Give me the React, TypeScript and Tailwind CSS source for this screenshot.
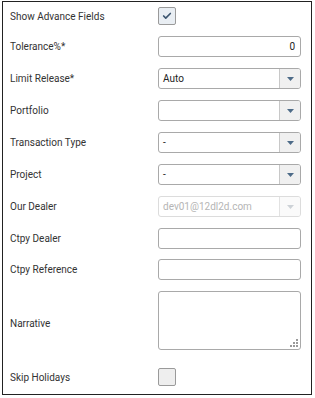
import { Check } from "lucide-react"

const labelCls = "w-[148px] shrink-0 text-[10px] text-[#333]"

function Caret({ disabled }: { disabled?: boolean }) {
  return (
    <div
      className={`w-[21px] h-full flex items-center justify-center border-l ${
        disabled ? "border-[#e2e2e2] bg-[#fafafa]" : "border-[#c8c8c8] bg-[#f0f0f0]"
      }`}
    >
      <svg width="7" height="4" viewBox="0 0 7 4">
        <path d="M0 0 H7 L3.5 4 Z" fill={disabled ? "#cdd2d7" : "#4d6b88"} />
      </svg>
    </div>
  )
}

function Select({ value, disabled }: { value?: string; disabled?: boolean }) {
  return (
    <div
      className={`w-[143px] h-[21px] flex rounded-[3px] border overflow-hidden ${
        disabled ? "border-[#dcdcdc]" : "border-[#a9a9a9]"
      }`}
    >
      <div
        className={`flex-1 px-[4px] flex items-center text-[10px] ${
          disabled ? "text-[#b5b5b5]" : "text-[#222]"
        }`}
      >
        {value}
      </div>
      <Caret disabled={disabled} />
    </div>
  )
}

function TextBox({ value, right }: { value?: string; right?: boolean }) {
  return (
    <div
      className={`w-[143px] h-[21px] rounded-[3px] border border-[#a9a9a9] px-[5px] flex items-center text-[10px] text-[#222] ${
        right ? "justify-end" : ""
      }`}
    >
      {value}
    </div>
  )
}

function CheckBox({ checked }: { checked?: boolean }) {
  return (
    <div
      className={`w-[18px] h-[18px] rounded-[2px] border border-[#9a9a9a] flex items-center justify-center ${
        checked ? "bg-[#e9eef3]" : "bg-[#eeeeee]"
      }`}
    >
      {checked && <Check className="w-[10px] h-[10px] text-[#3d5670]" strokeWidth={4} />}
    </div>
  )
}

export default function App() {
  return (
    <div
      className="ml-[2px] mt-[1px] w-[310px] h-[394px] border-[1.5px] border-[#222] bg-white pt-[5px] pl-[7px]"
      style={{ fontFamily: "Roboto, 'Noto Sans', sans-serif" }}
    >
      <div className="flex items-center h-[18px]">
        <span className={labelCls}>Show Advance Fields</span>
        <CheckBox checked />
      </div>
      <div className="flex flex-col gap-[11px] mt-[11px]">
        <div className="flex items-center h-[21px]">
          <span className={labelCls}>Tolerance%*</span>
          <TextBox value="0" right />
        </div>
        <div className="flex items-center h-[21px]">
          <span className={labelCls}>Limit Release*</span>
          <Select value="Auto" />
        </div>
        <div className="flex items-center h-[21px]">
          <span className={labelCls}>Portfolio</span>
          <Select />
        </div>
        <div className="flex items-center h-[21px]">
          <span className={labelCls}>Transaction Type</span>
          <Select value="-" />
        </div>
        <div className="flex items-center h-[21px]">
          <span className={labelCls}>Project</span>
          <Select value="-" />
        </div>
        <div className="flex items-center h-[21px]">
          <span className={labelCls}>Our Dealer</span>
          <Select value="dev01@12dl2d.com" disabled />
        </div>
        <div className="flex items-center h-[21px]">
          <span className={labelCls}>Ctpy Dealer</span>
          <TextBox />
        </div>
        <div className="flex items-center h-[21px] -mt-[1px]">
          <span className={labelCls}>Ctpy Reference</span>
          <TextBox />
        </div>
        <div className="flex items-center h-[59px]">
          <span className={`${labelCls} mt-[6px]`}>Narrative</span>
          <div className="relative w-[143px] h-[59px] rounded-[3px] border border-[#a9a9a9]">
            <svg className="absolute right-[2px] bottom-[2px]" width="8" height="8" viewBox="0 0 8 8">
              <rect x="6" y="0" width="2" height="2" fill="#9a9a9a" />
              <rect x="3" y="3" width="2" height="2" fill="#9a9a9a" />
              <rect x="6" y="3" width="2" height="2" fill="#9a9a9a" />
              <rect x="0" y="6" width="2" height="2" fill="#9a9a9a" />
              <rect x="3" y="6" width="2" height="2" fill="#9a9a9a" />
              <rect x="6" y="6" width="2" height="2" fill="#9a9a9a" />
            </svg>
          </div>
        </div>
        <div className="flex items-center h-[18px] mt-[7px]">
          <span className={labelCls}>Skip Holidays</span>
          <CheckBox />
        </div>
      </div>
    </div>
  )
}
